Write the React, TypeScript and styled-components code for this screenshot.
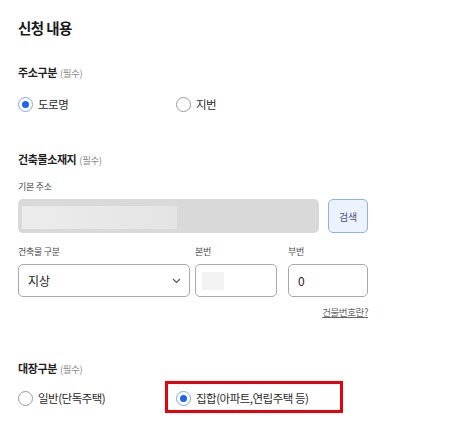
import React from "react";
import styled, { createGlobalStyle } from "styled-components";

const Global = createGlobalStyle`
  html, body { margin: 0; padding: 0; background: #fff; }
  body { font-family: "Noto Sans CJK KR", "Noto Sans", sans-serif; color: #222; }
  *, *::before, *::after { box-sizing: border-box; }
`;

const Page = styled.div`
  width: 466px;
  height: 428px;
  padding: 18px 0 0 18px;
  overflow: hidden;
`;

const Form = styled.div`
  width: 350px;
  display: flex;
  flex-direction: column;
`;

const Title = styled.h2`
  margin: 0;
  font-size: 14.5px;
  line-height: 20px;
  font-weight: 700;
  letter-spacing: -0.6px;
  color: #1a1a1a;
`;

const SectionLabel = styled.div<{ $mt: number }>`
  margin-top: ${(p) => p.$mt}px;
  font-size: 11px;
  line-height: 16px;
  font-weight: 700;
  letter-spacing: -0.4px;
  color: #1f1f1f;
`;

const Required = styled.span`
  font-weight: 400;
  font-size: 9.5px;
  color: #8a8a8a;
  margin-left: 3px;
`;

const RadioRow = styled.div<{ $mt: number }>`
  margin-top: ${(p) => p.$mt}px;
  display: grid;
  grid-template-columns: 158px 1fr;
  height: 20px;
  align-items: center;
`;

const RadioItem = styled.label<{ $highlight?: boolean }>`
  position: relative;
  display: inline-flex;
  align-items: center;
  gap: 5px;
  font-size: 11.5px;
  letter-spacing: -0.5px;
  color: #2a2a2a;
  justify-self: start;
  ${(p) =>
    p.$highlight &&
    `
    &::after {
      content: "";
      position: absolute;
      left: -11px;
      top: -9px;
      width: 178px;
      height: 32px;
      border: 3px solid #e8000b;
      pointer-events: none;
    }
  `}
`;

const RadioCircle = styled.span<{ $checked?: boolean }>`
  width: 15px;
  height: 15px;
  border-radius: 50%;
  border: 1px solid ${(p) => (p.$checked ? "#7ea6f2" : "#9a9a9a")};
  display: inline-flex;
  align-items: center;
  justify-content: center;
  background: #fff;
  &::after {
    content: "";
    width: 7px;
    height: 7px;
    border-radius: 50%;
    background: ${(p) => (p.$checked ? "#1f63f0" : "transparent")};
  }
`;

const SmallLabel = styled.div<{ $mt?: number }>`
  margin-top: ${(p) => p.$mt ?? 0}px;
  font-size: 9px;
  line-height: 14px;
  color: #4a4a4a;
  letter-spacing: -0.3px;
`;

const AddressRow = styled.div`
  margin-top: 5px;
  display: flex;
  gap: 9px;
  height: 34px;
`;

const DisabledInput = styled.div`
  flex: 1;
  background: #d9d9d9;
  border-radius: 5px;
  padding: 7px 0 0 4px;
`;

const Masked = styled.div`
  width: 155px;
  height: 23px;
  background: linear-gradient(90deg, #ececec, #e4e4e4);
`;

const SearchButton = styled.button`
  width: 40px;
  height: 34px;
  border: 1px solid #8cb2f3;
  background: #edf3fe;
  border-radius: 5px;
  font-family: inherit;
  font-size: 10px;
  color: #4a5878;
  padding: 0;
  letter-spacing: -0.3px;
`;

const FieldsRow = styled.div`
  margin-top: 12px;
  display: grid;
  grid-template-columns: 172px 82px 1fr;
  column-gap: 5px;
`;

const Field = styled.div<{ $ml?: number }>`
  display: flex;
  flex-direction: column;
  gap: 5px;
  margin-left: ${(p) => p.$ml ?? 0}px;
`;

const Box = styled.div`
  height: 33px;
  border: 1px solid #a9a9a9;
  border-radius: 5px;
  display: flex;
  align-items: center;
  padding: 0 9px;
  font-size: 12px;
  color: #222;
  background: #fff;
`;

const SelectBox = styled(Box)`
  justify-content: space-between;
  padding: 0 8px 0 9px;
`;

const MaskedNum = styled.div`
  width: 22px;
  height: 18px;
  background: #f3f3f3;
  margin-left: -3px;
`;

const HelpLink = styled.a`
  display: block;
  margin-top: 8px;
  align-self: flex-end;
  font-size: 9.5px;
  line-height: 14px;
  height: 14px;
  color: #666;
  text-decoration: underline;
  letter-spacing: -0.4px;
`;

const Chevron = () => (
  <svg width="9" height="6" viewBox="0 0 9 6" fill="none">
    <path d="M1 1l3.5 3.5L8 1" stroke="#555" strokeWidth="1.1" />
  </svg>
);

export default function App() {
  return (
    <>
      <Global />
      <Page>
        <Form>
          <Title>신청 내용</Title>

          <SectionLabel $mt={26}>
            주소구분<Required>(필수)</Required>
          </SectionLabel>
          <RadioRow $mt={13}>
            <RadioItem>
              <RadioCircle $checked />
              도로명
            </RadioItem>
            <RadioItem>
              <RadioCircle />
              지번
            </RadioItem>
          </RadioRow>

          <SectionLabel $mt={37}>
            건축물소재지<Required>(필수)</Required>
          </SectionLabel>
          <SmallLabel $mt={12}>기본 주소</SmallLabel>
          <AddressRow>
            <DisabledInput>
              <Masked />
            </DisabledInput>
            <SearchButton>검색</SearchButton>
          </AddressRow>

          <FieldsRow>
            <Field>
              <SmallLabel>건축물 구분</SmallLabel>
              <SelectBox>
                지상
                <Chevron />
              </SelectBox>
            </Field>
            <Field>
              <SmallLabel>본번</SmallLabel>
              <Box>
                <MaskedNum />
              </Box>
            </Field>
            <Field $ml={6}>
              <SmallLabel>부번</SmallLabel>
              <Box>0</Box>
            </Field>
          </FieldsRow>
          <HelpLink>건물번호란?</HelpLink>

          <SectionLabel $mt={41}>
            대장구분<Required>(필수)</Required>
          </SectionLabel>
          <RadioRow $mt={11}>
            <RadioItem>
              <RadioCircle />
              일반(단독주택)
            </RadioItem>
            <RadioItem $highlight>
              <RadioCircle $checked />
              집합(아파트,연립주택 등)
            </RadioItem>
          </RadioRow>
        </Form>
      </Page>
    </>
  );
}
